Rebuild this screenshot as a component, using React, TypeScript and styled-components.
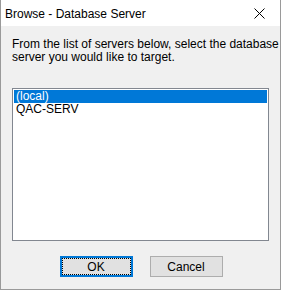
import React, { useState } from "react";
import styled, { createGlobalStyle } from "styled-components";

const GlobalStyle = createGlobalStyle`
  html, body {
    margin: 0;
    padding: 0;
    background: #ffffff;
  }
  body {
    font-family: "Liberation Sans", Arial, sans-serif;
    font-size: 12px;
    color: #000;
  }
`;

const Window = styled.div`
  box-sizing: border-box;
  width: 281px;
  height: 290px;
  display: flex;
  flex-direction: column;
  background: #f0f0f0;
  border: 1px solid #9a9a9a;
  border-top: none;
  overflow: hidden;
`;

const TitleBar = styled.div`
  height: 26px;
  flex-shrink: 0;
  display: flex;
  align-items: center;
  justify-content: space-between;
  background: #ffffff;
  padding-left: 4px;
`;

const Title = styled.span`
  font-size: 12px;
  line-height: 16px;
  margin-top: 1px;
  white-space: nowrap;
`;

const CloseButton = styled.div`
  width: 44px;
  height: 26px;
  display: flex;
  align-items: center;
  justify-content: center;
  margin-right: -1px;
`;

const Body = styled.div`
  flex: 1;
  display: flex;
  flex-direction: column;
  padding: 12px 11px 0 11px;
`;

const Prompt = styled.p`
  margin: 0;
  line-height: 13px;
  font-size: 12px;
  white-space: nowrap;
`;

const ListBox = styled.ul`
  box-sizing: border-box;
  list-style: none;
  margin: 24px 0 0 0;
  padding: 1px;
  height: 153px;
  flex-shrink: 0;
  background: #ffffff;
  border: 1px solid #828790;
`;

const ListItem = styled.li<{ $selected?: boolean }>`
  height: 13px;
  line-height: 13px;
  padding-left: 2px;
  font-size: 12px;
  white-space: nowrap;
  color: ${(p) => (p.$selected ? "#ffffff" : "#000000")};
  background: ${(p) => (p.$selected ? "#0078d7" : "transparent")};
  cursor: default;
`;

const ButtonRow = styled.div`
  display: flex;
  justify-content: center;
  gap: 17px;
  margin-top: 15px;
  padding-left: 1px;
`;

const Button = styled.button<{ $default?: boolean }>`
  box-sizing: border-box;
  width: 73px;
  height: 21px;
  padding: 0;
  font-family: inherit;
  font-size: 12px;
  color: #000;
  background: #e1e1e1;
  border: ${(p) => (p.$default ? "2px solid #0078d7" : "1px solid #adadad")};
  position: relative;
  outline: none;

  & > span {
    display: flex;
    align-items: center;
    justify-content: center;
    box-sizing: border-box;
    position: absolute;
    inset: ${(p) => (p.$default ? "0" : "1px")};
    border: ${(p) => (p.$default ? "1px dotted #000" : "none")};
  }
`;

export default function App() {
  const [selected, setSelected] = useState(0);
  const servers = ["(local)", "QAC-SERV"];

  return (
    <>
      <GlobalStyle />
      <Window>
        <TitleBar>
          <Title>Browse - Database Server</Title>
          <CloseButton>
            <svg width="11" height="11" viewBox="0 0 11 11">
              <path d="M0.5 0.5 L10.5 10.5 M10.5 0.5 L0.5 10.5" stroke="#000" strokeWidth="1" />
            </svg>
          </CloseButton>
        </TitleBar>
        <Body>
          <Prompt>
            From the list of servers below, select the database
            <br />
            server you would like to target.
          </Prompt>
          <ListBox>
            {servers.map((s, i) => (
              <ListItem key={s} $selected={i === selected} onClick={() => setSelected(i)}>
                {s}
              </ListItem>
            ))}
          </ListBox>
          <ButtonRow>
            <Button $default>
              <span>OK</span>
            </Button>
            <Button>
              <span>Cancel</span>
            </Button>
          </ButtonRow>
        </Body>
      </Window>
    </>
  );
}
